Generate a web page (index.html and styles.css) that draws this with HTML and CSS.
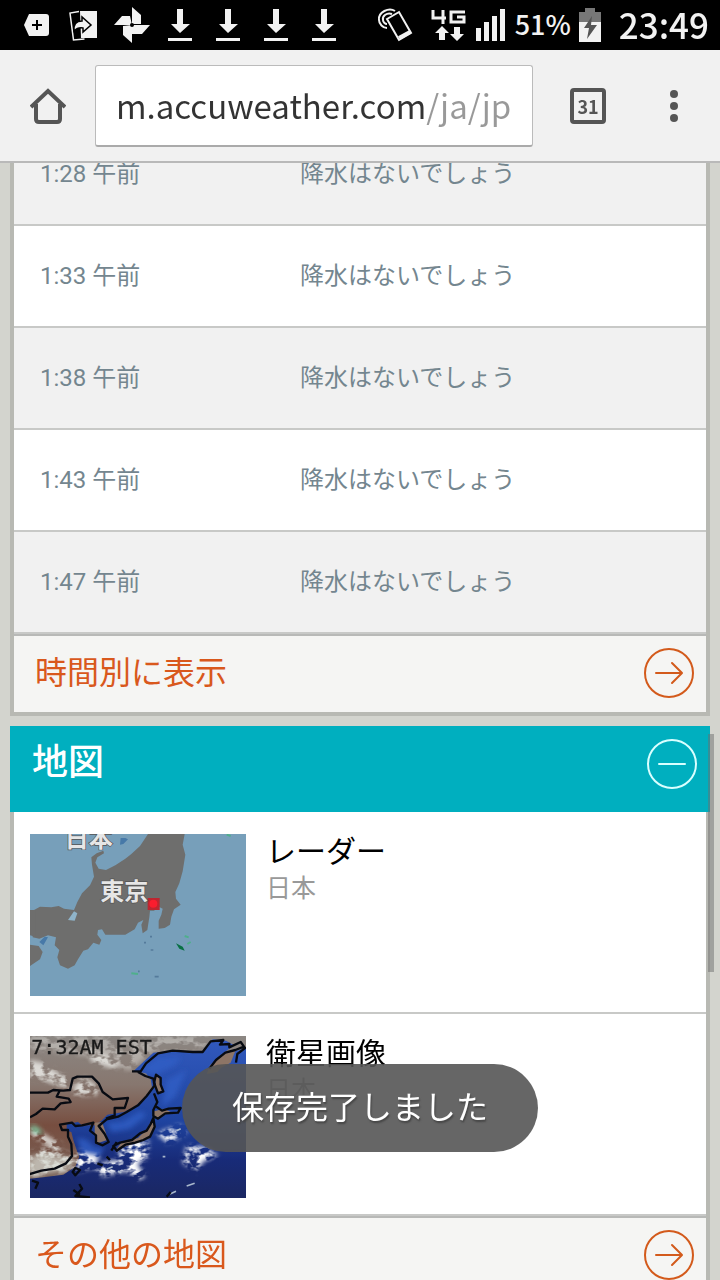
FILE: index.html
```html
<!DOCTYPE html>
<html lang="ja">

<head>
  <meta charset="UTF-8" />
  <meta name="viewport" content="width=device-width" />
  <title>AccuWeather</title>
  <link rel="stylesheet" href="styles.css">
</head>

<body>
  <!-- icons used more than once -->
  <svg class="defs">
    <symbol id="download" viewBox="0 0 48 50">
      <path d="M21 9h6v15h7L24 33l-9-9h6zM12 38h24v3H12z" fill="#f2f2f2" />
    </symbol>
    <symbol id="arrow" viewBox="0 0 50 50">
      <g fill="none" stroke="#d35a1b" stroke-width="2" stroke-linecap="round" stroke-linejoin="round">
        <circle cx="25" cy="25" r="24" />
        <path d="M12 25h25M28 15l10 10-10 10" />
      </g>
    </symbol>
  </svg>

  <div class="top">
    <div class="status">
      <div class="notices">
        <svg viewBox="0 0 48 50">
          <path d="M17 14h17q3 0 3 3v16q0 3-3 3H17l-5-11z" fill="#f2f2f2" />
          <path d="M25 20v10M20 25h10" stroke="#000" stroke-width="2" />
        </svg>
        <svg viewBox="0 0 48 50">
          <path d="M20 11h17v27H21z" fill="#f2f2f2" />
          <path d="M19 11.500l-9 1.500 3.500 27 11-1" fill="none" stroke="#f2f2f2" stroke-width="1.500" />
          <path d="M14 31q-1-10 8-10v-4l9 8-8 7v-4q-5-1-9 3z" fill="#f2f2f2" stroke="#000" stroke-width="1.500" />
        </svg>
        <svg viewBox="0 0 48 50">
          <path d="M24 24V7l9 8v9zM24 25h18l-8 9H24zM24 25v18l-9-8v-9zM24 25H6l8-9h8z" fill="#f2f2f2" />
          <circle cx="24" cy="25" r="2" fill="#000" />
        </svg>
        <svg><use href="#download" /></svg>
        <svg><use href="#download" /></svg>
        <svg><use href="#download" /></svg>
        <svg><use href="#download" /></svg>
      </div>
      <div class="system">
        <svg class="nfc" width="36" height="50" viewBox="0 0 36 50">
          <g fill="none" stroke="#f2f2f2" stroke-width="2">
            <path d="M10 19l12-7 12 21-12 7z" />
            <path d="M22 38l11-6" stroke-width="4" />
            <path d="M18 11C12 7 1 12 2 20c0 4 4 8 8 8M15 14c-5-2-10 2-9 6 0 2 2 4 4 4" />
          </g>
        </svg>
        <svg width="36" height="50" viewBox="0 0 36 50">
          <path d="M2 10v8h13M12 10v14M34 12H20v10h13v-5h-7" fill="none" stroke="#f2f2f2" stroke-width="3" />
          <path d="M11 26l7 7h-4v7H8v-7H4zM23 27h6v7h4l-7 7-7-7h4z" fill="#f2f2f2" />
        </svg>
        <svg width="32" height="50" viewBox="0 0 32 50">
          <path d="M1 28h5v13H1zM9 22h5v19H9zM17 16h5v25h-5zM25 9h5v32h-5z" fill="#f2f2f2" />
        </svg>
        <span class="percent">51%</span>
        <svg width="22" height="50" viewBox="0 0 22 50">
          <path d="M6 8h10v4h6v11H0V12h6z" fill="#777" />
          <path d="M0 22h22v20H0z" fill="#f2f2f2" />
          <path d="M13 16L5 28h5l-2 11 10-14h-6z" fill="#555" />
        </svg>
        <span class="clock">23:49</span>
      </div>
    </div>

    <div class="browser">
      <button class="icon-btn" aria-label="ホーム">
        <svg width="36" height="36" viewBox="0 0 36 36">
          <path d="M1 19L18 3l17 16M6 16v15q0 3 3 3h18q3 0 3-3V16" fill="none" stroke="#555" stroke-width="4" />
        </svg>
      </button>
      <div class="url-box">
        <input class="url" type="text" aria-label="URL" value="m.accuweather.com/ja/jp">
      </div>
      <button class="tabs" aria-label="タブ">31</button>
      <button class="icon-btn" aria-label="メニュー">
        <svg width="36" height="36" viewBox="0 0 36 36">
          <g fill="#555">
            <circle cx="18" cy="6" r="4" />
            <circle cx="18" cy="18" r="4" />
            <circle cx="18" cy="30" r="4" />
          </g>
        </svg>
      </button>
    </div>
  </div>

  <main>
    <section class="card">
      <table>
        <tr><td>1:28 午前</td><td>降水はないでしょう</td></tr>
        <tr><td>1:33 午前</td><td>降水はないでしょう</td></tr>
        <tr><td>1:38 午前</td><td>降水はないでしょう</td></tr>
        <tr><td>1:43 午前</td><td>降水はないでしょう</td></tr>
        <tr><td>1:47 午前</td><td>降水はないでしょう</td></tr>
      </table>
      <a class="more" href="#">
        時間別に表示
        <svg width="50" height="50"><use href="#arrow" /></svg>
      </a>
    </section>

    <section>
      <div class="title">
        <h2>地図</h2>
        <button class="toggle" aria-label="閉じる">
          <svg width="50" height="50" viewBox="0 0 50 50">
            <g fill="none" stroke="#d9ffff" stroke-width="2" stroke-linecap="round">
              <circle cx="25" cy="25" r="24" />
              <path d="M12 25h26" />
            </g>
          </svg>
        </button>
      </div>
      <div class="card">
        <a class="map" href="#">
          <!-- radar -->
          <svg class="thumb" viewBox="60 42 648 486">
            <path d="M60 42h648v486H60z" fill="#779fba" />
            <path d="M414 42h110l-6 32 8 30-8 50-10 36-12 26 2 20 14 18-20 14-8 22-4 24-16 10-18 2 0-24 8-18 4-18-12-6-14 12-12 0-2 20-6 38-14 10-4-26 6-14-16 8-10 20-28 16-60 0-10-16-12 2-2 14 12 16-6 14-18-6-16 20-14 4-16 26-10 18-20 10-24-10-8-24 6-22-14-14 4-24-24-6-26 10-20-4V272l22-12 34 2 22-4 16 8 30 4 10-24 14-26 24-24 12-26-6-36-2-22 16-12 20-8 2 8-20 12-6 16 10 18 22 4 28-14 30-20 18-14 26-24z" fill="#6e6e6d" />
            <path d="M60 270h16v80l-16-4zM60 374l26 4 12 18-8 22-30 20z" fill="#6e6e6d" />
            <path d="M174 300l18-26 10 6-8 22z" fill="#8fb4ca" />
            <path d="M332 54l14 0 8 4-14 14-10 2zM88 366l16-16 10 2-14 24z" fill="#4779a8" />
            <path d="M498 370l20 10 6 12-16-6z" fill="#087044" />
            <path d="M524 348l12 4M532 372l10-6M364 460l20 2M650 44l12 4" stroke="#4faf8c" stroke-width="6" />
            <path d="M402 368h6M422 390h8M434 470h12M420 350h6M384 454h5" stroke="#557b9b" stroke-width="5" />
            <path d="M413 234h36v36h-36z" fill="#bd2630" />
            <circle cx="430" cy="251" r="12" fill="#fa1d2e" />
            <g class="map-label">
              <text x="164" y="82">日本</text>
              <text x="271" y="240">東京</text>
            </g>
          </svg>
          <div>
            <h3>レーダー</h3>
            <p>日本</p>
          </div>
        </a>
        <a class="map" href="#">
          <!-- satellite -->
          <svg class="thumb" viewBox="60 78 648 486">
            <defs>
              <linearGradient id="land" x1="0" y1="0" x2="0" y2="1">
                <stop offset="0" stop-color="#8c8783" />
                <stop offset=".3" stop-color="#87776f" />
                <stop offset=".55" stop-color="#774e40" />
                <stop offset="1" stop-color="#79685f" />
              </linearGradient>
              <linearGradient id="sea" x1="0" y1="0" x2="0" y2="1">
                <stop offset="0" stop-color="#3159bd" />
                <stop offset=".5" stop-color="#1f44a1" />
                <stop offset=".75" stop-color="#182b78" />
                <stop offset="1" stop-color="#1b2761" />
              </linearGradient>
              <filter id="soft"><feGaussianBlur stdDeviation="8" /></filter>
              <!-- breaks the cloud shapes up into wisps -->
              <filter id="cloud">
                <feGaussianBlur in="SourceGraphic" stdDeviation="8" result="shape" />
                <feTurbulence type="fractalNoise" baseFrequency=".03 .05" numOctaves="3" seed="4" />
                <feColorMatrix values="0 0 0 0 1  0 0 0 0 1  0 0 0 0 1  5 0 0 0 -2" result="noise" />
                <feComposite in="shape" in2="noise" operator="in" />
              </filter>
            </defs>
            <path d="M60 78h648v486H60z" fill="url(#land)" />
            <g filter="url(#cloud)" fill="#dcdad6">
              <path d="M60 78h540l-20 36-150 8-70 60-60-20-60-24-180-20z" opacity=".5" />
              <path d="M60 150l40 8 50 34 36 14-10 30-60-20-56-14zM190 230l30-30 50 34-10 20-66 2zM230 120l50 10 50 32-20 14-64-20z" />
              <path d="M60 430l44-20 50 14 50 16 0 16-34 28-50 6-60 10zM64 344l30 24 60 34-10 20-80-46z" />
            </g>
            <path d="M60 440l40-10 80 14 16 16-40 22-96 16z" fill="#d9ddd4" filter="url(#soft)" opacity=".7" />
            <path d="M60 344l24 8 16 20-30-4z" fill="#80cca5" filter="url(#soft)" />
            <path d="M370 184l60-56 66-6 82 2 30-36 40 4 24 14-24 18-20 16-28 26-10 26 32-6 54-62 32-10v456H60v-64l40-4 60-8 36-24 12-30-8-20-10-30-6-24-14-4 0-20 34-6 12 10 38 0 20-14 18-18 50-8 30-14 34-28 20-32-4-24-14-18-30-6z" fill="url(#sea)" />
            <g filter="url(#soft)">
              <path d="M390 180l54-38 70-2-18 26-60 28zM200 384l30 4 24 22 30 2-18 30-50-8zM290 340l50-6 50-30 20 10-50 42-54 10zM470 210l60-30-34 80-40 30z" fill="#315fc6" opacity=".8" />
            </g>
            <g filter="url(#cloud)" fill="#fff">
              <path d="M330 414l46-24 40 2-4 50-30 20 24 36-20 12-36-28-44 10 20-40zM530 408l54 4 40 24-44 18-20 30-42-26zM204 424l66 14-20 34-56 14zM440 370l70-24 20 22-56 32zM250 470l60-20 50 20-80 30z" />
            </g>
            <path d="M324 484l10 4M458 440h8M500 362l12-6M530 528l24-8M480 552l18-8M290 478l18-8" stroke="#a9b8cc" stroke-width="5" />
            <path d="M436 196l12 8 8 44-18-6zM432 304l30-8 20 10-26 12-26 8zM424 332l12 16-16 36-44 16-56 18 14-20 50-14 26-26zM254 338l22-2 12 34 4 20-30 10-8-30zM600 170l34-34 44-18-16 40-56 30z" fill="#8d7566" />
            <g fill="none" stroke="#080b12" stroke-width="7" stroke-linejoin="round">
              <path d="M60 248h54l16-8 30 2 20-2 8-34 14-6h44l20 20 12 26 30 22 46-4-10 30-30 0 0 22-26 10M60 322l18-10 20-16 36 2 18-18 30-4-6-10-36-6 10-20" />
              <path d="M366 184h26l16-24 36-30 44-8 60 4 30 0 24-32 38-4-10 14 28-2 0 10 34-16 10 14-26 10-30 8-28 22-20 26M708 112l-26 20-4 26M384 186l22 12 24 8 4 20-24 32-26 28-34 20-26 14-34 8-24 20 18 24 12 24-18 10-20-8 0-22-18-14 10-24-34 8-20 2-10-10-36 6 6 16 18 0 0 20 10 22 2 36-18 22-34 16-40 6-48 14" />
              <path d="M438 194l14 10 0 20 8 20-16 6-12-32zM432 250l10 26-12 24 0 18 14 8 22-16 38-2 8-14-36 2-20 6-20-14M430 324l4 26-14 30-20 10-24 8-30 6-26 18-10-14 20-10 36-8 24-20 20-8 12-20z" />
              <path d="M320 396l-16 26M290 440l10 10M262 460l16 6M196 474l14 6-14 16-8-10zM208 522l8 14-20 22 44 4M190 540l20 14M66 512l18 6-8 18M470 560l12-14" />
            </g>
            <text class="stamp" x="64" y="131">7:32AM EST</text>
          </svg>
          <div>
            <h3>衛星画像</h3>
            <p>日本</p>
          </div>
        </a>
        <a class="more" href="#">
          その他の地図
          <svg width="50" height="50"><use href="#arrow" /></svg>
        </a>
      </div>
    </section>
    <div class="scrollbar"></div>
  </main>

  <div class="toast" role="status">保存完了しました</div>
</body>

</html>
```
FILE: styles.css
```css
* {
  box-sizing: border-box;
}

body {
  margin: 0;
  height: 100vh;
  overflow: hidden;
  background-color: #d3d4ce;
  font-family: Roboto, "Noto Sans CJK JP", sans-serif;
}

h2,
h3,
p {
  margin: 0;
  font-weight: 400;
}

a {
  text-decoration: none;
}

button {
  padding: 0;
  border: none;
  background: none;
}

svg {
  display: block;
  flex: none;
}

.defs {
  position: absolute;
  width: 0;
  height: 0;
}

/* status bar and address bar stay above the page */
.top {
  position: sticky;
  top: 0;
  z-index: 2;
}

.status {
  display: flex;
  justify-content: space-between;
  height: 50px;
  padding: 0 11px 0 12px;
  background-color: #000;
  color: #f2f2f2;
}

.notices {
  display: flex;
}

.notices svg {
  width: 48px;
  height: 50px;
}

.system {
  display: flex;
  gap: 8px;
  line-height: 48px;
  font-family: "Noto Sans CJK JP", sans-serif;
  font-weight: 500;
}

.nfc {
  margin-right: 10px;
}

.percent {
  font-size: 27px;
}

.clock {
  margin-left: 10px;
  font-size: 35px;
}

.browser {
  display: flex;
  align-items: center;
  height: 113px;
  padding-right: 22px;
  background-color: #f1f1f1;
  border-bottom: 2px solid #b9b9b9;
}

.icon-btn {
  display: flex;
  justify-content: center;
  width: 48px;
}

.icon-btn:first-child {
  width: 95px;
}

.url-box {
  flex: 1;
  height: 82px;
  padding: 0 10px 0 20px;
  background-color: #fff;
  border: 1px solid #bbb;
  border-bottom: 2px solid #aaa;
  border-radius: 3px;
}

/* the path part of the address is greyed out */
.url {
  display: block;
  width: 100%;
  height: 100%;
  padding: 0;
  border: none;
  outline: none;
  color: #333;
  font-family: "Noto Sans CJK JP", sans-serif;
  font-size: 33px;
  background: linear-gradient(to right, #333 310px, #999 310px);
  -webkit-background-clip: text;
  background-clip: text;
  -webkit-text-fill-color: transparent;
}

.tabs {
  width: 36px;
  height: 36px;
  margin: 0 44px 0 37px;
  border: 4px solid #555;
  border-radius: 4px;
  color: #555;
  font-family: "Noto Sans CJK JP", sans-serif;
  font-size: 18px;
  font-weight: 700;
  line-height: 26px;
}

main {
  position: relative;
  margin-top: -39px;
  padding: 0 10px;
}

.card {
  background-color: #fff;
  border: 4px solid #b8b9b3;
  border-top: none;
  margin-bottom: 10px;
}

table {
  width: 100%;
  border-spacing: 0;
  color: #74868f;
  font-size: 24px;
}

td {
  height: 102px;
  padding: 0 0 6px;
  border-bottom: 2px solid #c8c9c7;
}

td:first-child {
  width: 286px;
  padding-left: 26px;
}

tr:nth-child(odd) {
  background-color: #f1f1f1;
}

.more {
  display: flex;
  justify-content: space-between;
  height: 78px;
  padding: 12px 12px 0 21px;
  background-color: #f5f5f3;
  border-top: 2px solid #b8b9b7;
  color: #d9581c;
  font-size: 32px;
  line-height: 50px;
}

.title {
  display: flex;
  justify-content: space-between;
  height: 86px;
  padding: 13px 13px 0 22px;
  background-color: #00afbf;
  color: #fff;
}

.title h2 {
  font-size: 36px;
  font-weight: 500;
  line-height: 48px;
}

.toggle {
  height: 50px;
}

.map {
  display: flex;
  gap: 20px;
  height: 202px;
  padding: 22px 16px 0;
  border-bottom: 2px solid #c8c9c7;
  color: #000;
}

.thumb {
  width: 216px;
  height: 162px;
}

.map h3 {
  font-size: 30px;
  line-height: 36px;
}

.map p {
  color: #999;
  font-size: 25px;
  line-height: 38px;
}

.map-label {
  fill: #e6e6e6;
  stroke: #555;
  stroke-width: 4px;
  paint-order: stroke;
  font-family: "Noto Sans CJK JP", sans-serif;
  font-size: 72px;
  font-weight: 700;
}

.stamp {
  fill: #1a1a1a;
  stroke: #1a1a1a;
  stroke-width: 1px;
  font-family: "DejaVu Sans Mono", monospace;
  font-size: 60px;
}

.scrollbar {
  position: absolute;
  top: 610px;
  right: 6px;
  width: 6px;
  height: 238px;
  background-color: rgba(110, 110, 110, .5);
}

.toast {
  position: fixed;
  bottom: 128px;
  left: 50%;
  z-index: 3;
  padding: 0 50px;
  border-radius: 44px;
  transform: translateX(-50%);
  background-color: rgba(85, 85, 85, .9);
  color: #fff;
  font-size: 32px;
  line-height: 88px;
  white-space: nowrap;
  text-shadow: 1px 2px 2px #444;
}
```
